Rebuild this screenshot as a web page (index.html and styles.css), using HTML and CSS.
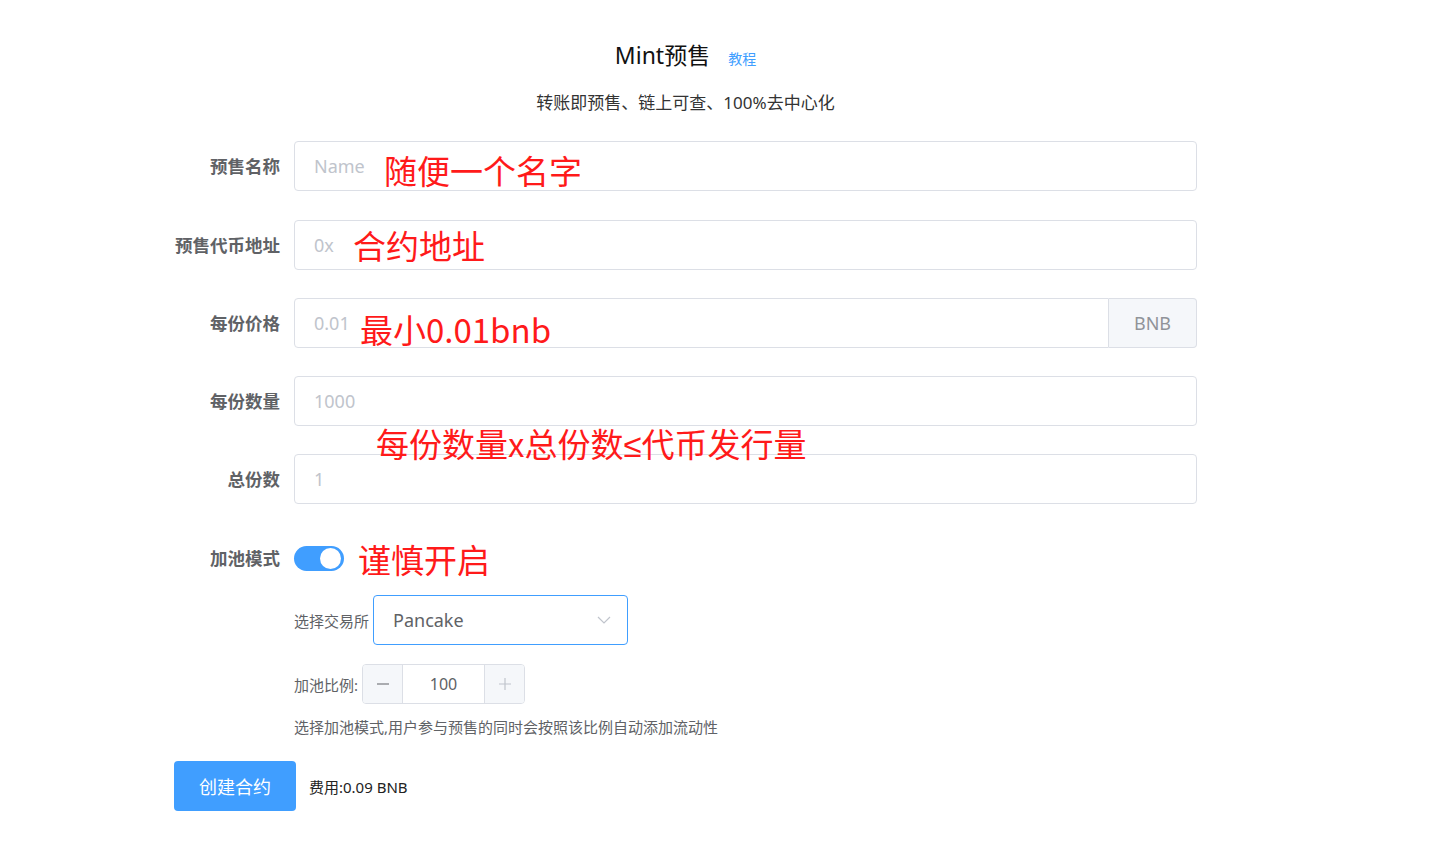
FILE: index.html
```html
<!DOCTYPE html>
<html lang="zh">
<head>
<meta charset="utf-8">
<title>Mint预售</title>
<link rel="stylesheet" href="styles.css">
</head>
<body>
<div class="page">
  <div class="head">
    <h1 class="title">Mint预售</h1>
    <a class="tutorial" href="#">教程</a>
  </div>
  <p class="subtitle">转账即预售、链上可查、100%去中心化</p>

  <form class="form">
    <div class="row">
      <label class="label">预售名称</label>
      <div class="control"><div class="input"><span class="ph">Name</span></div></div>
    </div>
    <div class="row">
      <label class="label">预售代币地址</label>
      <div class="control"><div class="input"><span class="ph">0x</span></div></div>
    </div>
    <div class="row">
      <label class="label">每份价格</label>
      <div class="control">
        <div class="input group"><span class="ph">0.01</span></div>
        <div class="append">BNB</div>
      </div>
    </div>
    <div class="row">
      <label class="label">每份数量</label>
      <div class="control"><div class="input"><span class="ph">1000</span></div></div>
    </div>
    <div class="row">
      <label class="label">总份数</label>
      <div class="control"><div class="input"><span class="ph">1</span></div></div>
    </div>
    <div class="row switch-row">
      <label class="label">加池模式</label>
      <div class="control"><span class="switch"><span class="knob"></span></span></div>
    </div>

    <div class="sub">
      <div class="sub-row select-row">
        <span class="sub-label">选择交易所</span>
        <div class="select">
          <span class="select-value">Pancake</span>
          <svg class="chev" width="14" height="8" viewBox="0 0 14 8"><path d="M1 1l6 6 6-6" fill="none" stroke="#c0c4cc" stroke-width="1.2"/></svg>
        </div>
      </div>
      <div class="sub-row num-row">
        <span class="sub-label">加池比例:</span>
        <div class="number">
          <span class="nbtn minus"><svg width="14" height="14" viewBox="0 0 14 14"><path d="M1 7h12" stroke="#606266" stroke-width="1.2"/></svg></span>
          <span class="nval">100</span>
          <span class="nbtn plus"><svg width="14" height="14" viewBox="0 0 14 14"><path d="M1 7h12M7 1v12" stroke="#c0c4cc" stroke-width="1.2"/></svg></span>
        </div>
      </div>
      <p class="hint">选择加池模式,用户参与预售的同时会按照该比例自动添加流动性</p>
    </div>

    <div class="actions">
      <button type="button" class="btn">创建合约</button>
      <span class="fee">费用:0.09 BNB</span>
    </div>
  </form>

  <span class="note n1">随便一个名字</span>
  <span class="note n2">合约地址</span>
  <span class="note n3">最小0.01bnb</span>
  <span class="note n4">每份数量x总份数<span class="le">≤</span>代币发行量</span>
  <span class="note n5">谨慎开启</span>
</div>
</body>
</html>
```

FILE: styles.css
```css
* { box-sizing: border-box; }
html, body { margin: 0; padding: 0; background: #fff; }
body {
  font-family: "Noto Sans", "Noto Sans CJK SC", sans-serif;
  color: #303133;
}
.page {
  position: relative;
  width: 1023px;
  margin-left: 174px;
  padding-top: 39px;
}
.head {
  display: flex;
  justify-content: center;
  align-items: baseline;
  gap: 18px;
  height: 32px;
}
.title {
  margin: 0;
  font-size: 23px;
  font-weight: 400;
  color: #111;
  line-height: 32px;
}
.tutorial {
  font-size: 14px;
  color: #409eff;
  text-decoration: none;
}
.subtitle {
  margin: 20px 0 0;
  text-align: center;
  font-size: 17px;
  line-height: 24px;
  color: #333;
}
.form { margin-top: 26px; }
.row {
  display: flex;
  height: 50px;
  margin-bottom: 28px;
}
.row:first-child { margin-bottom: 29px; }
.row:nth-child(5) { margin-bottom: 29px; }
.label {
  width: 120px;
  flex: none;
  padding-right: 14px;
  text-align: right;
  line-height: 50px;
  font-size: 17.5px;
  font-weight: 700;
  color: #606266;
}
.control { flex: 1; display: flex; }
.input {
  flex: 1;
  height: 50px;
  border: 1px solid #dcdfe6;
  border-radius: 4px;
  padding-left: 19px;
  display: flex;
  align-items: center;
}
.input.group { border-radius: 4px 0 0 4px; }
.ph { font-size: 18px; color: #c0c4cc; }
.append {
  width: 88px;
  height: 50px;
  background: #f5f7fa;
  border: 1px solid #dcdfe6;
  border-left: 0;
  border-radius: 0 4px 4px 0;
  display: flex;
  align-items: center;
  justify-content: center;
  font-size: 18px;
  color: #909399;
}
.switch-row { margin-bottom: 12px; }
.switch-row .control { align-items: center; }
.switch {
  position: relative;
  display: inline-block;
  width: 50px;
  height: 25px;
  border-radius: 13px;
  background: #409eff;
}
.knob {
  position: absolute;
  top: 2px;
  right: 3px;
  width: 21px;
  height: 21px;
  border-radius: 50%;
  background: #fff;
}
.sub { margin-left: 120px; }
.sub-row { display: flex; align-items: center; }
.sub-label { font-size: 15px; color: #606266; }
.select {
  margin-left: 4px;
  width: 255px;
  height: 50px;
  border: 1px solid #409eff;
  border-radius: 4px;
  display: flex;
  align-items: center;
  justify-content: space-between;
  padding: 0 16px 0 19px;
}
.select-value { font-size: 18px; color: #606266; }
.num-row { margin-top: 19px; }
.number {
  margin-left: 4px;
  width: 163px;
  height: 40px;
  border: 1px solid #dcdfe6;
  border-radius: 4px;
  display: flex;
  overflow: hidden;
}
.nbtn {
  width: 40px;
  flex: none;
  background: #f5f7fa;
  display: flex;
  align-items: center;
  justify-content: center;
}
.minus { border-right: 1px solid #dcdfe6; }
.plus { border-left: 1px solid #dcdfe6; }
.nval {
  flex: 1;
  display: flex;
  align-items: center;
  justify-content: center;
  font-size: 16px;
  color: #606266;
}
.hint {
  margin: 12px 0 0;
  font-size: 15px;
  line-height: 22px;
  color: #606266;
}
.actions {
  display: flex;
  align-items: center;
  gap: 13px;
  margin-top: 23px;
}
.btn {
  width: 122px;
  height: 50px;
  border: 0;
  border-radius: 4px;
  background: #409eff;
  color: #fff;
  font-family: inherit;
  font-size: 18px;
}
.fee { font-size: 15px; font-weight: 400; color: #222; }
.note {
  position: absolute;
  font-family: "Noto Sans CJK SC", "Noto Sans", sans-serif;
  font-size: 33px;
  line-height: 40px;
  color: #ff1a1a;
  white-space: nowrap;
}
.le { font-family: "Liberation Sans", sans-serif; }
.n1 { left: 210px; top: 150px; }
.n2 { left: 179px; top: 225px; }
.n3 { left: 186px; top: 309px; }
.n4 { left: 202px; top: 423px; }
.n5 { left: 184px; top: 539px; }
```
